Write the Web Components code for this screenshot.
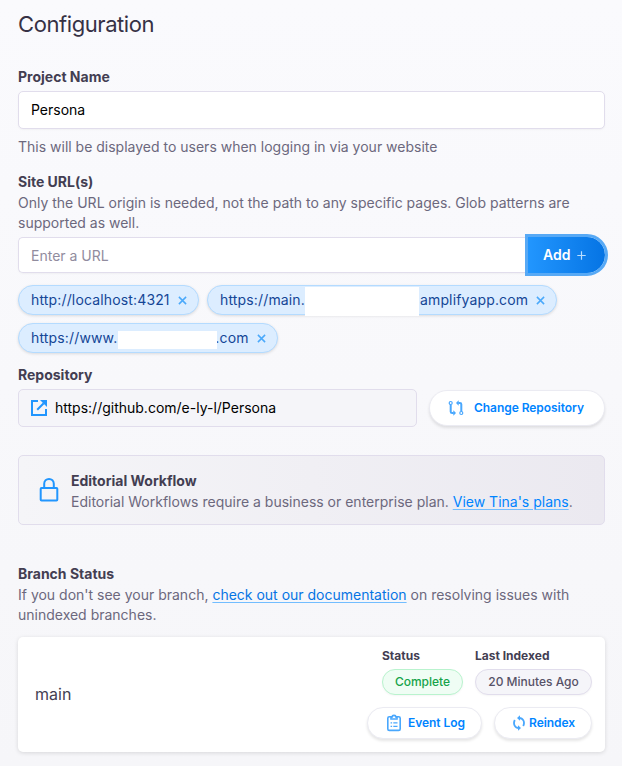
<!DOCTYPE html>
<html lang="en">
<head>
<meta charset="utf-8">
<title>Configuration</title>
<style>
body{margin:0;width:622px;height:766px;overflow:hidden;background:linear-gradient(#fafafd,#f6f6f9);font-family:Inter,"Liberation Sans",sans-serif;font-size:14px;line-height:20px;color:#6c687d}
</style>
</head>
<body>
<config-page></config-page>
<script>
function define(name, html) {
  const t = document.createElement('template');
  t.innerHTML = html;
  customElements.define(name, class extends HTMLElement {
    constructor() {
      super();
      this.attachShadow({mode: 'open'}).appendChild(t.content.cloneNode(true));
    }
  });
}

define('field-label', `<style>:host{display:block;font-weight:700;line-height:20px;color:#433e52}</style><slot></slot>`);

define('text-field', `<style>
:host{display:flex;align-items:center;box-sizing:border-box;height:38px;padding:0 12px;border:1px solid #e1ddec;border-radius:5px;background:#fff;color:#000;box-shadow:0 1px 2px rgba(0,0,0,.04)}
:host([muted]){background:#f5f5f9;box-shadow:none}
:host([placeholder]){color:#918c9e;padding-top:2px}
:host([joined]){border-radius:5px 0 0 5px;border-right:0}
</style><slot></slot>`);

define('url-chip', `<style>
:host{display:flex;align-items:center;box-sizing:border-box;height:30px;padding:0 11px 0 12px;border:1px solid #b4dbff;border-radius:15px;background:#dcedff;color:#144696;white-space:nowrap;letter-spacing:.15px;box-shadow:0 1px 3px rgba(0,0,0,.12);position:relative}
svg{margin-left:auto;flex:none}
</style><slot></slot><svg width="9" height="9" viewBox="0 0 9 9"><path d="M.9.9l7.2 7.2M8.1.9L.9 8.1" stroke="#4aa9fb" stroke-width="1.5" fill="none"/></svg><slot name="mask"></slot>`);

define('pill-button', `<style>
:host{display:flex;align-items:center;box-sizing:border-box;height:32px;border-radius:18px;background:#fff;color:#0084ff;font-size:12px;font-weight:600;white-space:nowrap;border:1px solid #ebebf2;box-shadow:0 2px 3px rgba(0,0,0,.1);letter-spacing:-.05px}
</style><slot></slot>`);

define('status-badge', `<style>
:host{display:flex;align-items:center;justify-content:center;box-sizing:border-box;height:26px;border:1px solid #e1ddec;border-radius:13px;background:#f5f5f9;color:#575267;font-size:12px;font-weight:550;white-space:nowrap;box-shadow:0 1px 2px rgba(0,0,0,.04)}
:host([success]){background:#effdf4;border-color:#b9f3ce;color:#16a34a}
</style><slot></slot>`);

define('text-link', `<style>:host{display:inline;color:#0574e4;text-decoration:underline;text-decoration-color:#72bdff;text-decoration-thickness:1px;text-underline-offset:2px}:host([bright]){color:#0084ff}</style><slot></slot>`);

define('upgrade-notice', `<style>
:host{display:flex;align-items:center;box-sizing:border-box;height:70px;padding-left:20px;gap:12px;border:1px solid #e1ddec;border-radius:5px;background:linear-gradient(to right,#f5f5f8,#ebe9f0)}
svg{flex:none}.b{padding-top:3px;white-space:nowrap}p{margin:1px 0 0}
</style>
<svg width="20" height="26" viewBox="0 0 20 26" fill="none" stroke="#2296fe" stroke-width="2"><rect x="1.7" y="11" width="16.6" height="12.5" rx=".8"/><path d="M5.2 11V6.7a4.8 4.8 0 0 1 9.6 0V11"/></svg>
<div class="b"><slot name="title"></slot><p><slot></slot></p></div>`);

define('add-button', `<style>
:host{display:flex;align-items:center;box-sizing:border-box;width:83px;height:42px;margin:-3px -3px -3px 0;padding-left:15px;gap:7px;border:3px solid #57a9f5;border-radius:0 21px 21px 0;background:linear-gradient(to right,#2296fe,#0574e4) padding-box;color:#fff;font-weight:600}
</style><slot></slot><svg width="9" height="9" viewBox="0 0 9 9"><path d="M4.5 .3v8.4M.3 4.5h8.4" stroke="#b9deff" stroke-width="1.2"/></svg>`);

define('branch-row', `<style>
:host{display:flex;justify-content:space-between;box-sizing:border-box;height:115px;padding:10px 13px 0 17px;border-radius:5px;background:#fff;box-shadow:0 1px 4px rgba(0,0,0,.13)}
.n{font-size:16px;color:#433e52;padding-top:37px}
.r{display:flex;flex-direction:column;align-items:flex-end;gap:12px}
.s,.a{display:flex;gap:12px}
.s>div{display:flex;flex-direction:column;gap:4px}
field-label{font-size:12px;line-height:18px}
</style>
<div class="n"><slot></slot></div>
<div class="r">
<div class="s"><div><field-label>Status</field-label><status-badge success style="width:81px">Complete</status-badge></div>
<div><field-label>Last Indexed</field-label><status-badge style="width:117px">20 Minutes Ago</status-badge></div></div>
<div class="a">
<pill-button style="width:115px;padding-left:18px;gap:6px"><svg width="16" height="18" viewBox="0 0 16 18" fill="none" stroke="#49a7fd" stroke-width="1.6"><rect x="1.8" y="2.8" width="12.4" height="13.6" rx="1.5"/><path d="M5 3.4V5h6V3.4L9.8 3C9.8.8 6.2.8 6.2 3z" fill="#fff"/><path d="M4.6 8.8h1.5M7.3 8.8h4.2M4.6 12.3h1.5M7.3 12.3h4.2" stroke-width="1.2"/></svg>Event Log</pill-button>
<pill-button style="width:98px;padding-left:18px;gap:4px"><svg width="12" height="16" viewBox="0 0 12 16" fill="none" stroke="#49a7fd" stroke-width="1.8"><path d="M6.2 3C9.9 3 12.3 6.8 10.2 11M5.8 13C2.1 13 -.3 9.2 1.8 5"/><path d="M7 .2v5.6L4 3zM5 10.2v5.6L8 13z" fill="#49a7fd" stroke="none"/></svg>Reindex</pill-button>
</div></div>`);

define('config-page', `<style>
:host{display:block;padding:8px 17px 0 18px}
h1{margin:0 0 27px;font-size:22px;line-height:32px;font-weight:400;letter-spacing:-.42px;color:#363145}
p{margin:0}
.row{display:flex}
.chips{display:flex;flex-wrap:wrap;gap:8px;margin:12px 0}
i{position:absolute;background:#fff}
</style>
<h1>Configuration</h1>
<field-label>Project Name</field-label>
<text-field style="margin:4px 0 8px">Persona</text-field>
<p>This will be displayed to users when logging in via your website</p>
<field-label style="margin:15px 0 1px">Site URL(s)</field-label>
<p>Only the URL origin is needed, not the path to any specific pages. Glob patterns are supported as well.</p>
<div class="row" style="margin-top:4px"><text-field joined placeholder style="flex:1;height:36px">Enter a URL</text-field><add-button>Add</add-button></div>
<div class="chips">
<url-chip style="width:181px">http://localhost:4321</url-chip>
<url-chip style="width:350px">https://main.<span style="margin-left:115px">amplifyapp.com</span><i slot="mask" style="left:97px;top:1px;width:114px;height:29px"></i></url-chip>
<url-chip style="width:260px">https://www.<span style="margin-left:98px">.com</span><i slot="mask" style="left:99px;top:7px;width:99px;height:18px"></i></url-chip>
</div>
<field-label>Repository</field-label>
<div class="row" style="margin:4px 0 28px;gap:12px;align-items:center">
<text-field muted style="width:399px;gap:8px"><svg width="16" height="16" viewBox="0 0 16 16" fill="none" stroke="#2296fe" stroke-width="2"><path d="M7 1H1v14h14V9"/><path d="M6.2 9.8l6.5-6.5"/><path d="M9 0h7v7z" fill="#2296fe" stroke="none"/></svg>https://github.com/e-ly-l/Persona</text-field>
<pill-button style="width:176px;height:36px;padding-left:18px;gap:10px"><svg width="16" height="16" viewBox="0 0 16 16" fill="none" stroke="#49a7fd" stroke-width="2"><circle cx="2.7" cy="3" r="1.5" stroke-width="1.2"/><circle cx="13.3" cy="13" r="1.5" stroke-width="1.2"/><path d="M2.7 4.5v7.2q0 1.4 1.4 1.4h1.6M13.3 11.5V4.3q0-1.4-1.4-1.4h-1.6"/><path d="M5.3 10.2v5.6L8 13zM10.7.2v5.6L8 3z" fill="#49a7fd" stroke="none"/></svg>Change Repository</pill-button></div>
<upgrade-notice><field-label slot="title">Editorial Workflow</field-label>Editorial Workflows require a business or enterprise plan. <text-link bright>View Tina's plans</text-link>.</upgrade-notice>
<field-label style="margin:39px 0 1px">Branch Status</field-label>
<p>If you don't see your branch, <text-link>check out our documentation</text-link> on resolving issues with<br>unindexed branches.</p>
<branch-row style="margin-top:12px">main</branch-row>`);
</script>
</body>
</html>
